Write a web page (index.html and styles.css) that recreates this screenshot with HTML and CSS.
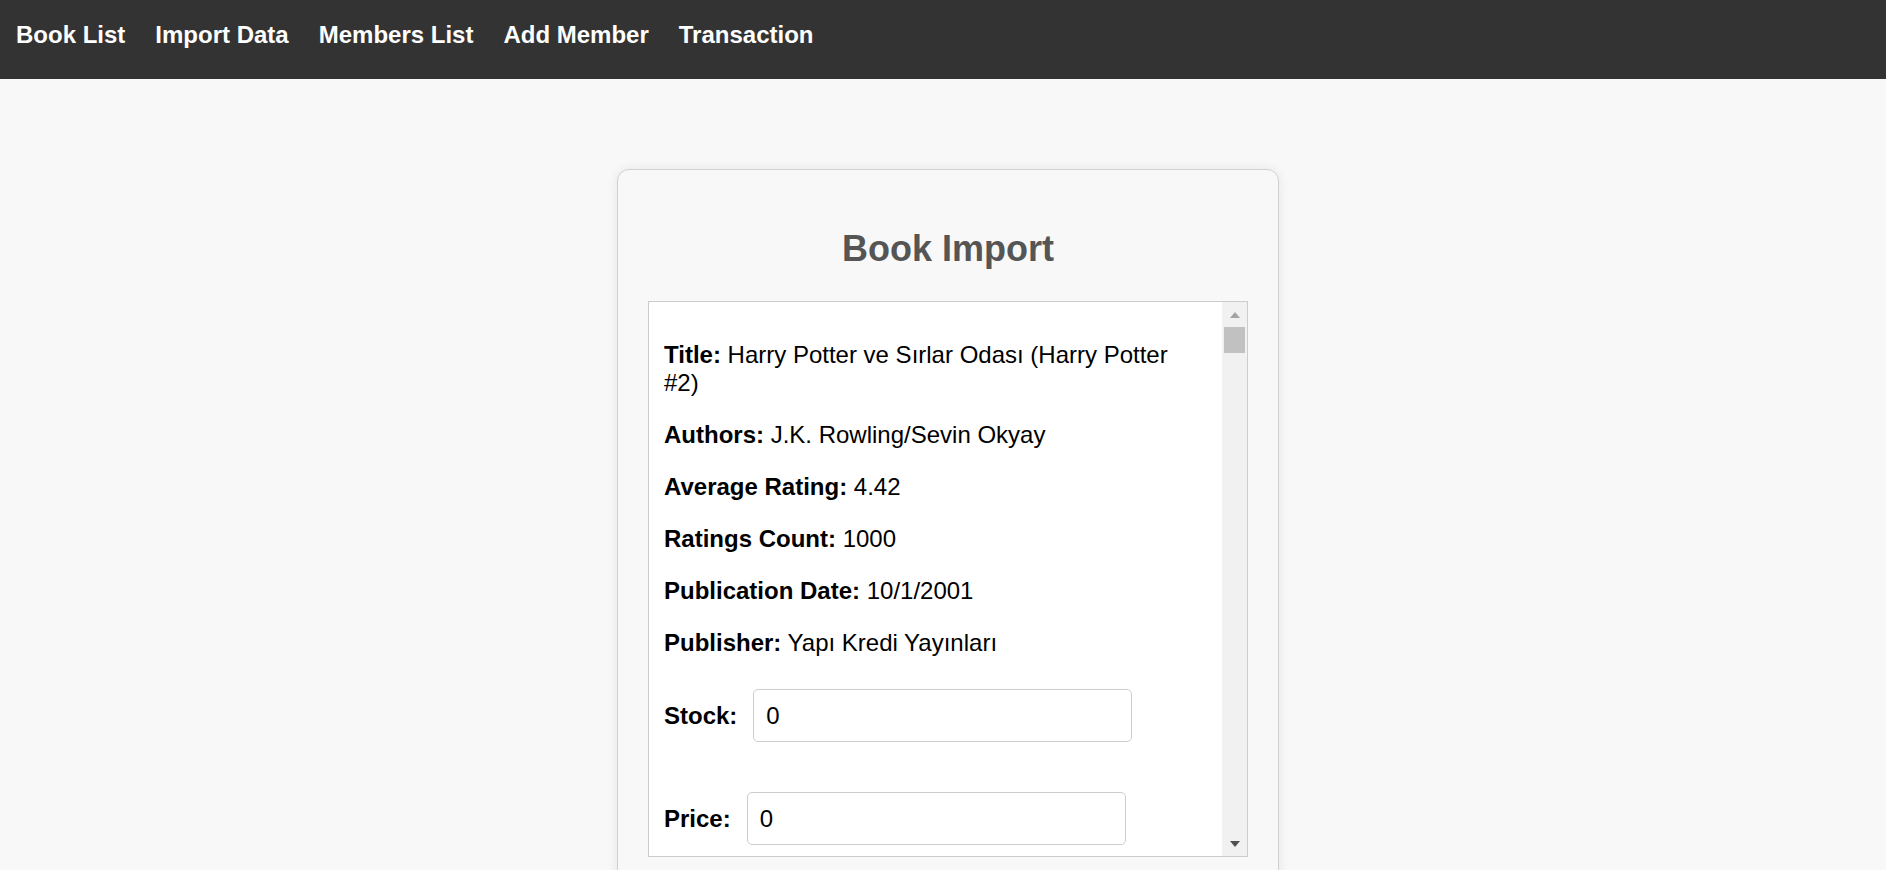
FILE: index.html
```html
<!DOCTYPE html>
<html lang="tr">
<head>
<meta charset="utf-8">
<title>Book Import</title>
<link rel="stylesheet" href="styles.css">
</head>
<body>
<nav class="navbar">
  <a class="nav-link" href="#">Book List</a>
  <a class="nav-link" href="#">Import Data</a>
  <a class="nav-link" href="#">Members List</a>
  <a class="nav-link" href="#">Add Member</a>
  <a class="nav-link" href="#">Transaction</a>
</nav>
<main class="page">
  <section class="card">
    <h2 class="card-title">Book Import</h2>
    <div class="scroll-box">
      <div class="scroll-content">
        <div class="book">
          <p class="field"><strong>Title:</strong> Harry Potter ve Sırlar Odası (Harry Potter #2)</p>
          <p class="field"><strong>Authors:</strong> J.K. Rowling/Sevin Okyay</p>
          <p class="field"><strong>Average Rating:</strong> 4.42</p>
          <p class="field"><strong>Ratings Count:</strong> 1000</p>
          <p class="field"><strong>Publication Date:</strong> 10/1/2001</p>
          <p class="field"><strong>Publisher:</strong> Yapı Kredi Yayınları</p>
          <div class="form-row form-row-stock">
            <label class="form-label" for="stock">Stock:</label>
            <input class="form-input" id="stock" type="text" value="0">
          </div>
          <div class="form-row form-row-price">
            <label class="form-label" for="price">Price:</label>
            <input class="form-input" id="price" type="text" value="0">
          </div>
        </div>
      </div>
      <div class="scrollbar" aria-hidden="true">
        <span class="sb-btn"><span class="sb-arrow sb-arrow-up"></span></span>
        <span class="sb-track"><span class="sb-thumb"></span></span>
        <span class="sb-btn"><span class="sb-arrow sb-arrow-down"></span></span>
      </div>
    </div>
  </section>
</main>
</body>
</html>
```
FILE: styles.css
```css
* { box-sizing: border-box; }

html, body {
  margin: 0;
  padding: 0;
}

body {
  background: #f8f8f8;
  font-family: "Liberation Sans", Arial, sans-serif;
  color: #000;
}

.navbar {
  height: 79px;
  background: #333333;
  display: flex;
  align-items: flex-start;
  gap: 30px;
  padding: 21px 16px 0;
}

.nav-link {
  color: #ffffff;
  text-decoration: none;
  font-weight: bold;
  font-size: 24px;
  line-height: 27.6px;
}

.page {
  display: flex;
  justify-content: center;
  padding: 90px 0 0 10px;
}

.card {
  width: 662px;
  background: #f8f8f8;
  border: 1px solid #d2d2d2;
  border-radius: 12px;
  box-shadow: 0 0 12px rgba(0, 0, 0, 0.08);
  padding: 30px 30px 40px;
}

.card-title {
  margin: 28px 0 32px;
  text-align: center;
  font-size: 36px;
  line-height: 41px;
  font-weight: bold;
  color: #555555;
}

.scroll-box {
  height: 556px;
  background: #ffffff;
  border: 1px solid #cccccc;
  display: flex;
}

.scroll-content {
  flex: 1;
  min-width: 0;
  overflow: hidden;
  padding: 15px 20px 15px 15px;
}

.field {
  margin: 24px 0;
  font-size: 24px;
  line-height: 28px;
}

.form-row {
  display: flex;
  align-items: center;
  gap: 16px;
}

.form-row-stock { margin-top: 32px; }
.form-row-price { margin-top: 50px; }

.form-label {
  font-weight: bold;
  font-size: 24px;
}

.form-input {
  width: 379px;
  height: 53px;
  flex: none;
  border: 1px solid #cccccc;
  border-radius: 5px;
  padding: 0 12px;
  font-family: "Liberation Sans", Arial, sans-serif;
  font-size: 24px;
  color: #000;
  background: #fff;
}

.scrollbar {
  width: 25px;
  flex: none;
  display: flex;
  flex-direction: column;
  background: #f1f1f1;
}

.sb-btn {
  height: 25px;
  flex: none;
  display: flex;
  justify-content: center;
  align-items: center;
}

.sb-arrow {
  width: 0;
  height: 0;
  border-left: 5.5px solid transparent;
  border-right: 5.5px solid transparent;
}

.sb-arrow-up {
  border-bottom: 6px solid #a3a3a3;
}

.sb-arrow-down {
  border-top: 6px solid #505050;
}

.sb-track {
  flex: 1;
  display: flex;
  flex-direction: column;
  padding: 0 2px;
}

.sb-thumb {
  height: 26px;
  background: #c1c1c1;
}
```
